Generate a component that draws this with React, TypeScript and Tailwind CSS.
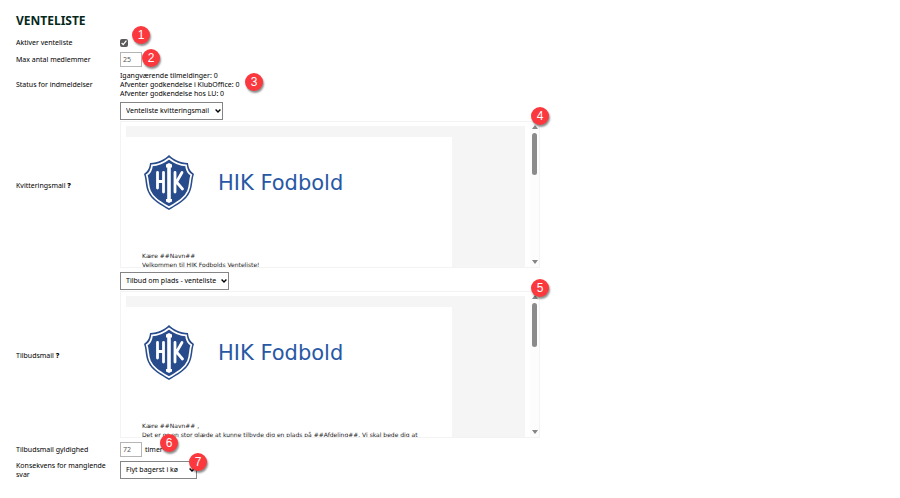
import { useState } from "react";
import type { ReactNode } from "react";

const Badge = ({ value, className }: { value: number; className: string }) => (
  <span
    className={`absolute z-10 flex h-[18px] w-[18px] items-center justify-center rounded-full bg-[#fa383e] font-['Liberation_Sans',sans-serif] text-[12px] leading-none text-white shadow-[1px_2px_2px_rgba(0,0,0,0.45)] ${className}`}
  >
    {value}
  </span>
);

type RowProps = {
  label: string;
  htmlFor?: string;
  help?: boolean;
  className?: string;
  children: ReactNode;
};

const Row = ({ label, htmlFor, help, className = "", children }: RowProps) => (
  <div className={`flex items-center ${className}`}>
    <label htmlFor={htmlFor} className="w-26 shrink-0 pr-3">
      {label}
      {help && <b className="font-black"> ?</b>}
    </label>
    <div className="relative min-w-0 flex-1">{children}</div>
  </div>
);

type SelectProps = {
  id: string;
  options: string[];
  className: string;
};

const Select = ({ id, options, className }: SelectProps) => (
  <div className={`relative ${className}`}>
    <select
      id={id}
      className="block h-[18px] w-full appearance-none border border-[#858585] bg-white pl-[5px] text-[7px] leading-[14px] text-black"
    >
      {options.map((option) => (
        <option key={option}>{option}</option>
      ))}
    </select>
    <svg
      viewBox="0 0 6 4"
      className="pointer-events-none absolute top-[7px] right-[2px] h-1 w-[6px]"
      fill="none"
      stroke="#000"
      strokeWidth="1.4"
    >
      <path d="M0.6 0.6 L3 3 L5.4 0.6" />
    </svg>
  </div>
);

const Crest = () => (
  <svg viewBox="0 0 50 55" className="h-[55px] w-[50px]" aria-label="HIK">
    <path
      fill="#284b8c"
      d="M25 0 C29 4 36 8 44 8 C44.500 13 46 16 50 19 C48 24 49 30 46 37 C42 46 33 50 25 55 C17 50 8 46 4 37 C1 30 2 24 0 19 C4 16 5.500 13 6 8 C14 8 21 4 25 0Z"
    />
    <path
      fill="none"
      stroke="#fff"
      strokeWidth="1.700"
      d="M25 3.500 C30 7.500 36 10.300 42 10.300 C42.500 15 44 18 47.300 20 C45.500 25 46.500 30 44 36 C40.500 44 32 48 25 52.300 C18 48 9.500 44 6 36 C3.500 30 4.500 25 2.700 20 C6 18 7.500 15 8 10.300 C14 10.300 20 7.500 25 3.500Z"
    />
    <g fill="none" stroke="#fff" strokeWidth="2.8" strokeLinecap="round">
      <path d="M13.500 17.500 V33 M19.500 17.500 V37 M13.500 26.500 H19.500" />
      <path d="M31 17.500 V37 M38 17.500 L32.500 27 L38.500 34" />
    </g>
    <path
      fill="#fff"
      d="M22 9.500 L25 8 L28 9.500 V12.500 H26.800 V44 H28 V46.500 L25 48 L22 46.500 V44 H23.200 V12.500 H22Z"
    />
  </svg>
);

type MailEditorProps = {
  lines: string[];
  thumb: string;
};

const MailEditor = ({ lines, thumb }: MailEditorProps) => (
  <div className="flex h-[147px] max-w-[420px] overflow-hidden border border-[#f3f3f3]">
    <div className="mt-1 ml-[5px] min-w-0 flex-1 bg-[#f5f5f5] pt-[11px]">
      <div className="h-full max-w-[326px] overflow-hidden bg-white pl-4 font-['DejaVu_Sans',Verdana,sans-serif]">
        <div className="flex items-center gap-[24px] pt-[18px] pl-[2px]">
          <Crest />
          <span className="text-[21px] leading-6 whitespace-nowrap text-[#2858a4]">
            HIK Fodbold
          </span>
        </div>
        <div className="pt-[41px] text-[6px] leading-[9px] whitespace-nowrap text-[#222]">
          {lines.map((line) => (
            <p key={line}>{line}</p>
          ))}
        </div>
      </div>
    </div>
    <div className="ml-[5px] flex w-[9px] flex-col items-center bg-[#fcfcfc] py-[3px]">
      <svg viewBox="0 0 6 4" className="h-1 w-[6px]" fill="#858585">
        <path d="M3 0 L6 4 H0Z" />
      </svg>
      <div className={`mt-1 w-[5px] rounded-full bg-[#8b8b8b] ${thumb}`} />
      <svg viewBox="0 0 6 4" className="mt-auto h-1 w-[6px]" fill="#858585">
        <path d="M0 0 H6 L3 4Z" />
      </svg>
    </div>
  </div>
);

const inputClass =
  "h-[15px] w-[22px] border border-[#b5b5b5] bg-white pl-[2px] text-[7px] text-[#555]";

const App = () => {
  const [active, setActive] = useState(true);
  const [maxMembers, setMaxMembers] = useState("25");
  const [validHours, setValidHours] = useState("72");

  return (
    <main className="bg-white px-4 pt-[14px] pb-4 font-['Noto_Sans',sans-serif] text-[7px] leading-[9px] text-black">
      <h1 className="mb-[9px] text-[12px] leading-[14px] font-bold text-[#06281c]">
        VENTELISTE
      </h1>
      <form className="flex flex-col gap-1">
        <Row label="Aktiver venteliste" htmlFor="active" className="h-[11px]">
          <input
            id="active"
            type="checkbox"
            checked={active}
            onChange={(e) => setActive(e.target.checked)}
            className="block h-2 w-2 accent-[#5b5b5b]"
          />
          <Badge value={1} className="-top-[13px] left-3" />
        </Row>
        <Row label="Max antal medlemmer" htmlFor="max">
          <input
            id="max"
            value={maxMembers}
            onChange={(e) => setMaxMembers(e.target.value)}
            className={`block ${inputClass}`}
          />
          <Badge value={2} className="-top-[3px] left-[22px]" />
        </Row>
        <Row label="Status for indmeldelser">
          <p>Igangværende tilmeldinger: 0</p>
          <p>Afventer godkendelse i KlubOffice: 0</p>
          <p>Afventer godkendelse hos LU: 0</p>
          <Badge value={3} className="top-[2px] left-[125px]" />
        </Row>
        <Row label="Kvitteringsmail" htmlFor="receipt" help>
          <Select
            id="receipt"
            options={["Venteliste kvitteringsmail"]}
            className="mb-[1px] w-[103px]"
          />
          <MailEditor
            lines={["Kære ##Navn##", "Velkommen til HIK Fodbolds Venteliste!"]}
            thumb="h-[42px]"
          />
          <Badge value={4} className="top-[5px] left-[411px]" />
        </Row>
        <Row label="Tilbudsmail" htmlFor="offer" help>
          <Select
            id="offer"
            options={["Tilbud om plads - venteliste"]}
            className="mb-[1px] w-[109px]"
          />
          <MailEditor
            lines={[
              "Kære ##Navn## ,",
              "Det er os en stor glæde at kunne tilbyde dig en plads på ##Afdeling##. Vi skal bede dig at",
            ]}
            thumb="h-[44px]"
          />
          <Badge value={5} className="top-[7px] left-[411px]" />
        </Row>
        <Row label="Tilbudsmail gyldighed" htmlFor="hours">
          <div className="flex items-center gap-[3px]">
            <input
              id="hours"
              value={validHours}
              onChange={(e) => setValidHours(e.target.value)}
              className={inputClass}
            />
            <span>timer</span>
          </div>
          <Badge value={6} className="-top-[8px] left-[40px]" />
        </Row>
        <Row label="Konsekvens for manglende svar" htmlFor="consequence">
          <Select
            id="consequence"
            options={["Flyt bagerst i kø"]}
            className="w-[77px]"
          />
          <Badge value={7} className="-top-[8px] left-[69px]" />
        </Row>
      </form>
    </main>
  );
};

export default App;
